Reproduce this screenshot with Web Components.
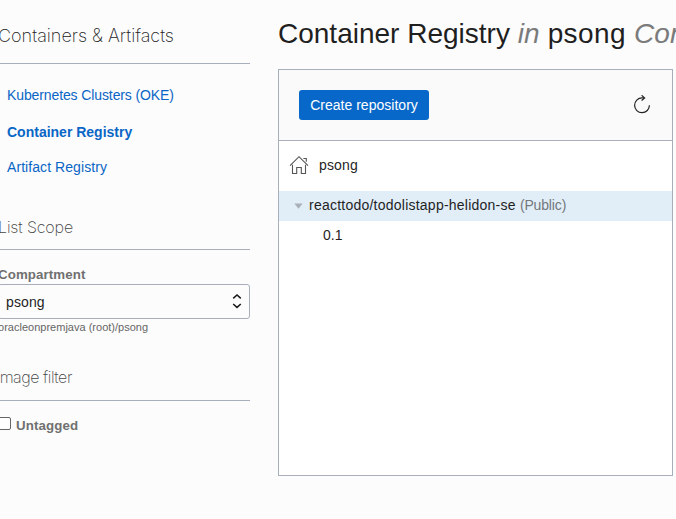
<!DOCTYPE html>
<html lang="en">
<head>
<meta charset="utf-8">
<title>Container Registry</title>
<style>
html,body{margin:0;height:100%;overflow:hidden;background:#fcfcfc}
body{font-family:"Liberation Sans",Arial,sans-serif;font-size:14px;color:#1f1f1f}
</style>
</head>
<body>
<registry-page></registry-page>
<script>
const define = (name, html) => {
  const t = document.createElement('template');
  t.innerHTML = html;
  customElements.define(name, class extends HTMLElement {
    constructor() {
      super();
      this.attachShadow({mode: 'open'}).append(t.content.cloneNode(true));
    }
  });
};

define('section-title', `<style>
:host{display:block;box-sizing:border-box;border-bottom:1px solid #a7afba;color:#444;
font-family:Inter,"Liberation Sans",sans-serif;font-weight:200;font-size:16px;line-height:18px;white-space:nowrap}
</style><slot></slot>`);

define('nav-link', `<style>
:host{display:block;height:20px;line-height:20px;color:#0a66c6;white-space:nowrap}
:host([active]){font-weight:bold}
</style><slot></slot>`);

define('select-box', `<style>
:host{display:flex;box-sizing:border-box;align-items:center;justify-content:space-between;height:35px;border:1px solid #a7afba;border-radius:3px;padding:1px 7px 0 7px;background:#fcfcfc;color:#1f1f1f;letter-spacing:.12px}
svg{display:block;margin-top:-3px}
</style><slot></slot><svg width="10" height="16" viewBox="0 0 10 16" fill="none" stroke="#1a1a1a" stroke-width="1.5"><path d="M1.2 5.4 5 2l3.8 3.4M1.2 11 5 14.4 8.8 11"/></svg>`);

define('check-box', `<style>
:host{display:flex;align-items:center;gap:5px;height:20px;color:#707070;font-weight:bold;font-size:13.3px;letter-spacing:.12px}
i{box-sizing:border-box;width:13px;height:13px;border:1px solid #666;border-radius:2px;background:#fff;margin-top:-3px}
</style><i></i><span><slot></slot></span>`);

define('primary-button', `<style>
:host{display:flex;align-items:center;justify-content:center;width:130px;height:30px;border-radius:3px;background:#0768c9;color:#fff;letter-spacing:.02px}
</style><slot></slot>`);

define('refresh-icon', `<style>:host,svg{display:block}</style>
<svg width="18" height="20" viewBox="0 0 18 20" fill="none" stroke="#222" stroke-width="1.2"><path d="M16.4 10.2A7.4 7.4 0 1 1 9 2.9h2.2"/><path d="m8.6 .3 3 2.6-3 2.6"/></svg>`);

define('home-icon', `<style>:host,svg{display:block}</style>
<svg width="20" height="20" viewBox="0 0 20 20" fill="none" stroke="#555" stroke-width="1.1"><path d="m1 10.7 9-9 9 9M14.4 3.5h2.9v3.2M3.5 9.8v8.7h4.2v-6h4.6v6h4.2V9.8"/></svg>`);

define('side-bar', `<style>
:host{display:block;width:252px;margin-left:-2px;flex:none}
.main{height:64px;padding-top:27px;font-size:18px;color:#222}
nav{display:flex;flex-direction:column;padding:21px 0 0 9px}
nav-link:nth-child(1){letter-spacing:-.11px}
nav-link:nth-child(2){margin-top:17px}
nav-link:nth-child(3){margin-top:15px;letter-spacing:.07px}
.scope{height:32px;margin-top:41px;letter-spacing:-.12px}
.label{height:20px;line-height:20px;margin-top:15px;margin-bottom:-1px;color:#707070;font-weight:bold;font-size:13.3px;letter-spacing:.1px}
.path{height:16px;line-height:16px;color:#666;font-size:11px;letter-spacing:.01px}
.filter{height:33px;margin-top:33px;text-indent:-2px;letter-spacing:-.45px}
check-box{margin-top:14px}
</style>
<section-title class="main">Containers &amp; Artifacts</section-title>
<nav><nav-link>Kubernetes Clusters (OKE)</nav-link><nav-link active>Container Registry</nav-link><nav-link>Artifact Registry</nav-link></nav>
<section-title class="scope">List Scope</section-title>
<div class="label">Compartment</div>
<select-box>psong</select-box>
<div class="path">oracleonpremjava (root)/psong</div>
<section-title class="filter">Image filter</section-title>
<check-box>Untagged</check-box>`);

define('repo-panel', `<style>
:host{display:block;box-sizing:border-box;width:395px;height:407px;border:1px solid #a7afba;background:#fff}
header{display:flex;box-sizing:border-box;height:71px;padding:0 21px 0 20px;align-items:center;justify-content:space-between;background:#fafafa;border-bottom:1px solid #a7afba}
.root{display:flex;box-sizing:border-box;height:50px;align-items:center;gap:10px;padding:0 0 2px 10px;letter-spacing:.15px}
.repo{display:flex;box-sizing:border-box;height:30px;align-items:center;background:#e1eef8;padding:0 0 2px 15px;white-space:pre;letter-spacing:.235px}
.repo svg{margin:2px 6px 0 0}
.tag{height:30px;line-height:29px;padding-left:44px}
em{font-style:normal;color:#74777c;letter-spacing:-.15px}
</style>
<header><primary-button>Create repository</primary-button><refresh-icon></refresh-icon></header>
<div class="root"><home-icon></home-icon><span>psong</span></div>
<div class="repo"><svg width="9" height="6" viewBox="0 0 9 6"><path fill="#a9b0b8" d="M.3.5h8.4L4.5 5.7z"/></svg><span>reacttodo/todolistapp-helidon-se <em>(Public)</em></span></div>
<div class="tag">0.1</div>`);

define('registry-page', `<style>
:host{display:flex;width:676px;height:519px;gap:28px;overflow:hidden}
main{flex:1;min-width:0;overflow:hidden}
h1{margin:0;height:69px;line-height:67px;font-size:28px;font-weight:normal;white-space:nowrap}
em{color:#7b7b7b}
span{letter-spacing:.4px}
</style>
<side-bar></side-bar>
<main><h1>Container Registry <em>in</em><span> psong </span><em>Compartment</em></h1><repo-panel></repo-panel></main>`);
</script>
</body>
</html>
